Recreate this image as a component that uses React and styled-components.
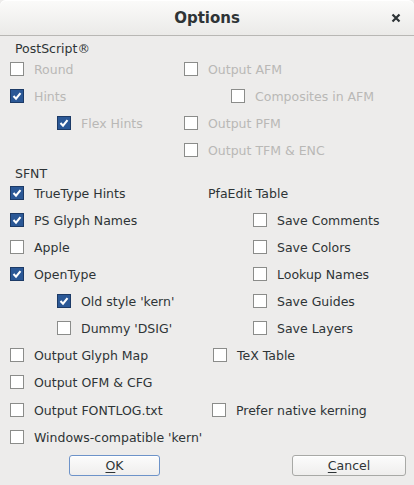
import React from "react";
import styled, { createGlobalStyle } from "styled-components";

const GlobalStyle = createGlobalStyle`
  html, body { margin: 0; padding: 0; background: #edeceb; }
  body { font-family: "DejaVu Sans", "Liberation Sans", sans-serif; font-size: 12.5px; color: #2e3436; }
`;

const Dialog = styled.div`
  width: 414px;
  height: 485px;
  display: flex;
  flex-direction: column;
  background: #edeceb;
  overflow: hidden;
`;

const TitleBar = styled.div`
  height: 35px;
  flex: none;
  display: grid;
  grid-template-columns: 1fr auto 1fr;
  align-items: center;
  background: linear-gradient(#fbfbfa, #ebeae8);
  border-bottom: 1px solid #b8b7b4;
  border-radius: 6px 6px 0 0;
  box-shadow: inset 0 1px 0 #ffffff;
`;

const Title = styled.div`
  grid-column: 2;
  font-weight: bold;
  font-size: 15px;
  color: #2e3436;
`;

const Close = styled.div`
  grid-column: 3;
  justify-self: end;
  margin-right: 12px;
  width: 12px;
  height: 12px;
  display: flex;
  align-items: center;
  justify-content: center;
`;

const Body = styled.div`
  padding: 6px 0 0 10px;
  display: flex;
  flex-direction: column;
`;

const SectionLabel = styled.div`
  padding-left: 5px;
  height: 14px;
  line-height: 14px;
  margin-top: ${(p) => p.$top || 0}px;
  margin-bottom: ${(p) => p.$bottom || 0}px;
`;

const Grid = styled.div`
  display: grid;
  grid-template-columns: ${(p) => p.$cols};
  grid-auto-rows: 22px;
  row-gap: 5px;
`;

const Cell = styled.div`
  display: flex;
  align-items: center;
  gap: 10px;
  padding-left: ${(p) => p.$indent || 0}px;
  margin-top: ${(p) => p.$shift || 0}px;
  color: ${(p) => (p.$disabled ? "#b9b8b6" : "#2e3436")};
  white-space: nowrap;
`;

const Box = styled.span`
  box-sizing: border-box;
  width: 14px;
  height: 14px;
  flex: none;
  border: 1px solid ${(p) => (p.$checked ? "#1c3a66" : "#8b8c8a")};
  background: ${(p) => (p.$checked ? "#2b5896" : "#ffffff")};
  display: flex;
  align-items: center;
  justify-content: center;
`;

const Plain = styled.div`
  display: flex;
  align-items: center;
  padding-left: ${(p) => p.$indent || 0}px;
`;

const ButtonRow = styled.div`
  display: flex;
  justify-content: space-between;
  padding: 0 8px 0 59px;
  margin-top: 8px;
`;

const Button = styled.button`
  box-sizing: border-box;
  width: ${(p) => p.$w}px;
  height: 21px;
  padding: 0;
  font-family: "DejaVu Sans", "Liberation Sans", sans-serif;
  font-size: 12.5px;
  color: #2e3436;
  border-radius: 3px;
  border: 1px solid ${(p) => (p.$focus ? "#6d93c9" : "#a8a9a6")};
  background: linear-gradient(#fcfcfc, #efeeed);
  box-shadow: inset 0 1px 0 #ffffff;
  u { text-decoration-thickness: 1px; text-underline-offset: 2px; }
`;

const Check = ({ checked, disabled, indent, shift, children }) => (
  <Cell $indent={indent} $disabled={disabled} $shift={shift}>
    <Box $checked={checked}>
      {checked && (
        <svg width="10" height="10" viewBox="0 0 10 10">
          <path d="M1.5 5.1 L4 7.7 L8.5 2.1" fill="none" stroke="#fff" strokeWidth="2.1" />
        </svg>
      )}
    </Box>
    <span>{children}</span>
  </Cell>
);

const Empty = () => <div />;

export default function App() {
  return (
    <>
      <GlobalStyle />
      <Dialog>
        <TitleBar>
          <Title>Options</Title>
          <Close>
            <svg width="10" height="10" viewBox="0 0 10 10">
              <path d="M1.5 1.5 L8.5 8.5 M8.5 1.5 L1.5 8.5" stroke="#2e3436" strokeWidth="2.2" />
            </svg>
          </Close>
        </TitleBar>
        <Body>
          <SectionLabel $bottom={2}>PostScript®</SectionLabel>
          <Grid $cols="174px 1fr">
            <Check disabled>Round</Check>
            <Check disabled>Output AFM</Check>
            <Check disabled checked>Hints</Check>
            <Check disabled indent={47}>Composites in AFM</Check>
            <Check disabled checked indent={47}>Flex Hints</Check>
            <Check disabled>Output PFM</Check>
            <Empty />
            <Check disabled>Output TFM &amp; ENC</Check>
          </Grid>
          <SectionLabel $top={6} $bottom={1}>SFNT</SectionLabel>
          <Grid $cols="198px 1fr">
            <Check checked>TrueType Hints</Check>
            <Plain>PfaEdit Table</Plain>
            <Check checked>PS Glyph Names</Check>
            <Check indent={45}>Save Comments</Check>
            <Check>Apple</Check>
            <Check indent={45}>Save Colors</Check>
            <Check checked>OpenType</Check>
            <Check indent={45}>Lookup Names</Check>
            <Check checked indent={47}>Old style 'kern'</Check>
            <Check indent={45}>Save Guides</Check>
            <Check indent={47}>Dummy 'DSIG'</Check>
            <Check indent={45}>Save Layers</Check>
            <Check>Output Glyph Map</Check>
            <Check indent={5}>TeX Table</Check>
            <Check>Output OFM &amp; CFG</Check>
            <Empty />
            <Check shift={2}>Output FONTLOG.txt</Check>
            <Check indent={4} shift={2}>Prefer native kerning</Check>
            <Check shift={2}>Windows-compatible 'kern'</Check>
            <Empty />
          </Grid>
          <ButtonRow>
            <Button $w={91} $focus>
              <u>O</u>K
            </Button>
            <Button $w={114}>
              <u>C</u>ancel
            </Button>
          </ButtonRow>
        </Body>
      </Dialog>
    </>
  );
}
